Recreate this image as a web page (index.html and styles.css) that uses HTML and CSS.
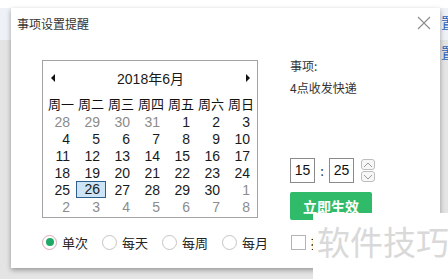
FILE: index.html
```html
<!DOCTYPE html>
<html lang="zh-CN">
<head>
    <meta charset="UTF-8">
    <title>事项设置提醒</title>
    <link rel="stylesheet" href="styles.css">
</head>
<body>
    <!-- 背景 -->
    <div class="desk">
        <div class="desk-top"></div>
        <div class="desk-band"></div>
        <div class="desk-rest"></div>
        <span class="desk-link link-1">置</span>
        <span class="desk-link link-2">置</span>
    </div>

    <!-- 对话框 -->
    <div class="dialog">
        <div class="dialog-title">
            <span>事项设置提醒</span>
            <svg class="close" width="14" height="14" viewBox="0 0 14 14">
                <path d="M1 1L13 13M13 1L1 13" stroke="#8c8c8c" stroke-width="1.1" fill="none"/>
            </svg>
        </div>

        <div class="dialog-body">
            <div class="main-row">
                <div class="calendar">
                    <div class="cal-head">
                        <span class="arrow arrow-left"></span>
                        <span class="cal-month">2018年6月</span>
                        <span class="arrow arrow-right"></span>
                    </div>
                    <div class="cal-grid">
                        <span class="wd">周一</span><span class="wd">周二</span><span class="wd">周三</span><span class="wd">周四</span><span class="wd">周五</span><span class="wd">周六</span><span class="wd">周日</span>
                        <span class="d other">28</span><span class="d other">29</span><span class="d other">30</span><span class="d other">31</span><span class="d">1</span><span class="d">2</span><span class="d">3</span>
                        <span class="d">4</span><span class="d">5</span><span class="d">6</span><span class="d">7</span><span class="d">8</span><span class="d">9</span><span class="d">10</span>
                        <span class="d">11</span><span class="d">12</span><span class="d">13</span><span class="d">14</span><span class="d">15</span><span class="d">16</span><span class="d">17</span>
                        <span class="d">18</span><span class="d">19</span><span class="d">20</span><span class="d">21</span><span class="d">22</span><span class="d">23</span><span class="d">24</span>
                        <span class="d">25</span><span class="d today">26</span><span class="d">27</span><span class="d">28</span><span class="d">29</span><span class="d">30</span><span class="d other">1</span>
                        <span class="d other">2</span><span class="d other">3</span><span class="d other">4</span><span class="d other">5</span><span class="d other">6</span><span class="d other">7</span><span class="d other">8</span>
                    </div>
                </div>

                <div class="side">
                    <div class="side-label">事项:</div>
                    <div class="side-text">4点收发快递</div>
                    <div class="time-row">
                        <span class="time-box">15</span>
                        <span class="colon">:</span>
                        <span class="time-box">25</span>
                        <span class="spin">
                            <span class="spin-btn">
                                <svg width="10" height="6" viewBox="0 0 10 6"><path d="M1 5L5 1L9 5" stroke="#999" fill="none"/></svg>
                            </span>
                            <span class="spin-btn">
                                <svg width="10" height="6" viewBox="0 0 10 6"><path d="M1 1L5 5L9 1" stroke="#999" fill="none"/></svg>
                            </span>
                        </span>
                    </div>
                    <button class="apply">立即生效</button>
                </div>
            </div>

            <div class="repeat-row">
                <label class="opt"><span class="radio checked"></span>单次</label>
                <label class="opt"><span class="radio"></span>每天</label>
                <label class="opt"><span class="radio"></span>每周</label>
                <label class="opt"><span class="radio"></span>每月</label>
                <label class="opt check-opt"><span class="check"></span><span class="cut">提</span></label>
            </div>
        </div>
    </div>

    <!-- 水印 -->
    <div class="watermark">软件技巧</div>
</body>
</html>
```

FILE: styles.css
```css
body {
    margin: 0;
    width: 448px;
    height: 279px;
    overflow: hidden;
    font-family: "Noto Sans", "Noto Sans CJK SC", sans-serif;
    color: #1a1a1a;
    position: relative;
}
.desk {
    height: 279px;
    display: flex;
    flex-direction: column;
    background: #e6e6e6;
}
.desk-top {
    height: 8px;
    background: #fff;
}
.desk-band {
    height: 32px;
    background: #eef1f6;
}
.desk-rest {
    flex: 1;
    background: #e4e4e4;
}
.desk-link {
    position: absolute;
    left: 441px;
    width: 7px;
    overflow: hidden;
    font-family: "Noto Sans CJK SC", sans-serif;
    font-size: 14px;
    line-height: 16px;
    color: #2a62b8;
}
.link-1 { top: 14px; }
.link-2 { top: 44px; }

/* 对话框 */
.dialog {
    position: absolute;
    left: 11px;
    top: 8px;
    width: 429px;
    height: 260px;
    background: #fff;
    box-shadow: 0 2px 5px rgba(0, 0, 0, 0.35);
}
.dialog-title {
    height: 30px;
    display: flex;
    align-items: center;
    justify-content: space-between;
    padding: 0 9px 0 6px;
    font-family: "Noto Sans CJK SC", sans-serif;
    font-size: 12px;
    color: #333;
}
.dialog-body {
    padding: 22px 0 0 31px;
}
.main-row {
    display: flex;
}

/* 日历 */
.calendar {
    width: 214px;
    height: 156px;
    border: 1px solid #a3a3a3;
}
.cal-head {
    height: 33px;
    display: flex;
    align-items: center;
    justify-content: space-between;
    padding: 0 7px 0 8px;
    font-size: 14px;
}
.cal-month {
    font-family: "Liberation Sans", "Noto Sans CJK SC", sans-serif;
}
.arrow {
    width: 0;
    height: 0;
    border-top: 4px solid transparent;
    border-bottom: 4px solid transparent;
}
.arrow-left { border-right: 4px solid #111; }
.arrow-right { border-left: 4px solid #111; }
.cal-grid {
    display: grid;
    grid-template-columns: repeat(7, 30px);
    grid-template-rows: 19px;
    grid-auto-rows: 17px;
    padding-left: 3px;
    font-family: "Liberation Sans", sans-serif;
    font-size: 14px;
    line-height: 16px;
}
.wd {
    font-family: "Noto Sans CJK SC", sans-serif;
    font-size: 13px;
    line-height: 19px;
    text-align: center;
    color: #111;
}
.d {
    text-align: right;
    padding-right: 6px;
    padding-top: 1px;
}
.d.other {
    color: #8c8c8c;
}
.d.today {
    background: #cde3f6;
    border: 1px solid #2f5f8c;
    line-height: 15px;
    padding: 0 5px 0 0;
}

/* 右侧 */
.side {
    margin-left: 32px;
    margin-top: -3px;
    display: flex;
    flex-direction: column;
    font-family: "Noto Sans CJK SC", sans-serif;
    font-size: 12px;
    color: #333;
}
.side-label {
    line-height: 18px;
}
.side-text {
    line-height: 18px;
    margin-top: 4px;
}
.time-row {
    margin-top: 61px;
    display: flex;
    align-items: center;
}
.time-box {
    width: 23px;
    height: 23px;
    border: 1px solid #8a8a8a;
    font-family: "Liberation Sans", sans-serif;
    font-size: 14px;
    line-height: 23px;
    text-align: center;
    color: #111;
}
.colon {
    width: 14px;
    text-align: center;
    font-size: 13px;
}
.spin {
    margin-left: 7px;
    display: flex;
    flex-direction: column;
    gap: 1px;
}
.spin-btn {
    width: 12px;
    height: 9px;
    border: 1px solid #bdbdbd;
    border-radius: 3px;
    display: flex;
    align-items: center;
    justify-content: center;
    background: #f7f7f7;
}
.apply {
    margin-top: 9px;
    width: 82px;
    height: 28px;
    border: none;
    border-radius: 2px;
    background: #2fbb69;
    color: #fff;
    font-family: "Noto Sans CJK SC", sans-serif;
    font-size: 14px;
    font-weight: bold;
    padding: 0;
}

/* 重复选项 */
.repeat-row {
    margin-top: 14px;
    display: flex;
    align-items: center;
    height: 16px;
    font-family: "Noto Sans CJK SC", sans-serif;
    font-size: 13px;
    color: #222;
}
.opt {
    display: flex;
    align-items: center;
    width: 60px;
}
.check-opt {
    margin-left: 9px;
    width: 22px;
    overflow: hidden;
}
.cut {
    flex: none;
}
.radio {
    width: 13px;
    height: 13px;
    border: 1px solid #c4c4c4;
    border-radius: 50%;
    margin-right: 5px;
    display: flex;
    align-items: center;
    justify-content: center;
}
.radio.checked {
    border-color: #d7a9b0;
}
.radio.checked::after {
    content: "";
    width: 8px;
    height: 8px;
    border-radius: 50%;
    background: #1fa866;
}
.check {
    flex: none;
    width: 13px;
    height: 13px;
    border: 1px solid #b4b4b4;
    margin-right: 5px;
}

/* 水印 */
.watermark {
    position: absolute;
    left: 313px;
    top: 213px;
    width: 135px;
    height: 66px;
    background: #fff;
    padding: 6px 0 0 4px;
    box-sizing: border-box;
    font-family: "Noto Sans CJK SC", sans-serif;
    font-size: 33px;
    line-height: 44px;
    color: #d9d9d9;
    white-space: nowrap;
}
```
